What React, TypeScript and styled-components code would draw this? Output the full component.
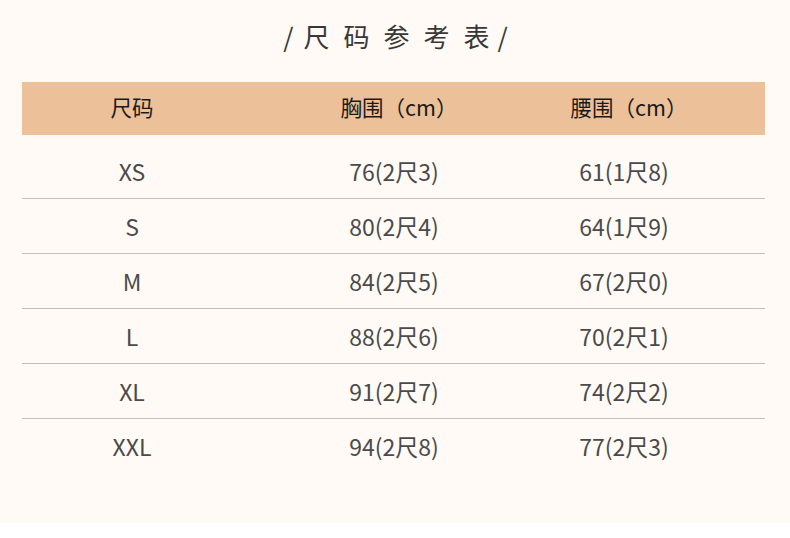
import React from 'react';
import styled, { createGlobalStyle } from 'styled-components';

const GlobalStyle = createGlobalStyle`
	html,
	body {
		margin: 0;
		padding: 0;
		background: #ffffff;
	}

	body {
		font-family: 'Noto Sans CJK SC', 'Noto Sans', sans-serif;
	}
`;

const Page = styled.div`
	width: 790px;
	height: 523px;
	background-color: #fffaf6;
	padding: 0 25px 0 22px;
	box-sizing: border-box;
`;

const Title = styled.h1`
	display: flex;
	justify-content: center;
	align-items: center;
	margin: 0;
	height: 70px;
	padding-left: 4px;
	font-size: 26px;
	font-weight: 400;
	letter-spacing: 14px;
	color: #383838;
`;

const Slash = styled.span<{ $end?: boolean }>`
	letter-spacing: 0;
	margin: ${({ $end }) => ($end ? '0 0 0 8px' : '0 10px 0 0')};
`;

const LastChar = styled.span`
	letter-spacing: 0;
`;

const Table = styled.div`
	margin-top: 12px;
	width: 743px;
`;

const HeadRow = styled.div`
	display: grid;
	grid-template-columns: 220px 304px 156px;
	align-items: center;
	height: 53px;
	padding-bottom: 5px;
	box-sizing: border-box;
	background-color: #ecc199;
	color: #1a1a1a;
	font-size: 21.5px;
`;

const Body = styled.div`
	padding-top: 8px;
`;

const Row = styled.div<{ $first?: boolean }>`
	display: grid;
	grid-template-columns: 220px 304px 156px;
	align-items: center;
	height: 55px;
	box-sizing: border-box;
	border-top: ${({ $first }) => ($first ? 'none' : '1px solid #c2bfbc')};
	color: #4a4a4a;
	font-size: 23px;
`;

const Cell = styled.div`
	text-align: center;
	white-space: nowrap;
`;

const HeadCell = styled(Cell)<{ $shift?: boolean }>`
	padding-left: ${({ $shift }) => ($shift ? '10px' : '0')};
`;

const rows = [
	['XS', '76(2尺3)', '61(1尺8)'],
	['S', '80(2尺4)', '64(1尺9)'],
	['M', '84(2尺5)', '67(2尺0)'],
	['L', '88(2尺6)', '70(2尺1)'],
	['XL', '91(2尺7)', '74(2尺2)'],
	['XXL', '94(2尺8)', '77(2尺3)'],
];

function App(): React.ReactElement {
	return (
		<>
			<GlobalStyle />
			<Page>
				<Title>
					<Slash>/</Slash>尺码参考<LastChar>表</LastChar>
					<Slash $end>/</Slash>
				</Title>
				<Table>
					<HeadRow>
						<HeadCell>尺码</HeadCell>
						<HeadCell $shift>胸围（cm）</HeadCell>
						<HeadCell $shift>腰围（cm）</HeadCell>
					</HeadRow>
					<Body>
						{rows.map((r, i) => (
							<Row key={r[0]} $first={i === 0}>
								<Cell>{r[0]}</Cell>
								<Cell>{r[1]}</Cell>
								<Cell>{r[2]}</Cell>
							</Row>
						))}
					</Body>
				</Table>
			</Page>
		</>
	);
}

export default App;
